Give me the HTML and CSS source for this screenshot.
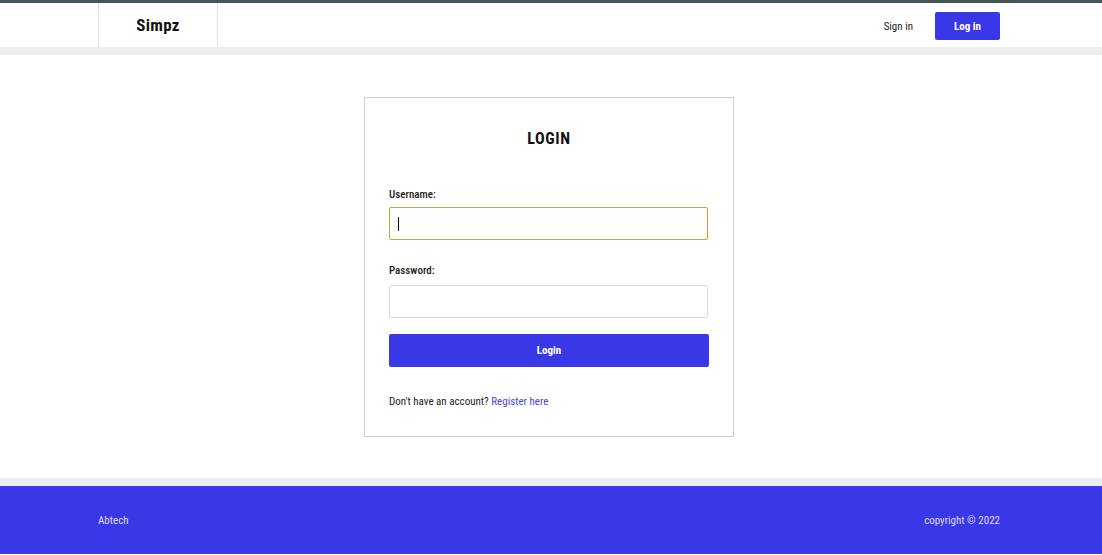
FILE: index.html
```html
<!DOCTYPE html>
<html lang="en">
<head>
<meta charset="utf-8">
<title>Simpz - Login</title>
<link rel="stylesheet" href="styles.css">
</head>
<body>
<header class="topbar">
  <div class="container nav">
    <a class="brand" href="#">Simpz</a>
    <div class="nav-actions">
      <a class="nav-link" href="#">Sign in</a>
      <a class="nav-btn" href="#">Log in</a>
    </div>
  </div>
</header>
<div class="band"></div>
<main class="main">
  <form class="card">
    <h2 class="card-title">LOGIN</h2>
    <label class="field-label" for="username">Username:</label>
    <div class="input-wrap">
      <input class="field-input active-input" id="username" type="text">
      <span class="caret"></span>
    </div>
    <label class="field-label field-label-2" for="password">Password:</label>
    <input class="field-input pw" id="password" type="password">
    <button class="submit" type="button">Login</button>
    <p class="register">Don't have an account? <a href="#">Register here</a></p>
  </form>
</main>
<div class="band"></div>
<footer class="footer">
  <div class="container foot">
    <span>Abtech</span>
    <span>copyright © 2022</span>
  </div>
</footer>
</body>
</html>
```

FILE: styles.css
```css
* { box-sizing: border-box; }
html, body { margin: 0; padding: 0; }
body {
  font-family: "Roboto Condensed", "Liberation Sans Narrow", "DejaVu Sans Condensed", Roboto, sans-serif;
  background: #fff;
  color: #111;
  font-size: 11px;
}
a { text-decoration: none; }

.container {
  width: 902px;
  margin-left: 98px;
}

.topbar {
  border-top: 3px solid #46575b;
  height: 47px;
  background: #fff;
}
.nav {
  display: flex;
  justify-content: space-between;
  align-items: center;
  height: 44px;
}
.brand {
  display: flex;
  align-items: center;
  justify-content: center;
  width: 120px;
  height: 44px;
  border-left: 1px solid #e2e2e2;
  border-right: 1px solid #e2e2e2;
  color: #111;
  font-weight: 700;
  font-size: 17px;
  letter-spacing: 0.3px;
}
.nav-actions {
  display: flex;
  align-items: center;
  gap: 22px;
  padding-top: 2px;
}
.nav-link {
  color: #222;
  font-size: 11px;
}
.nav-btn {
  display: flex;
  align-items: center;
  justify-content: center;
  width: 65px;
  height: 28px;
  background: #3a38e6;
  border-radius: 2px;
  color: #fff;
  font-weight: 700;
  font-size: 11px;
}

.band {
  height: 8px;
  background: #eeeeee;
}

.main {
  padding: 42px 0 41px 0;
  display: flex;
}
.card {
  margin-left: 364px;
  width: 370px;
  height: 340px;
  border: 1px solid #cfcfcf;
  padding: 31px 24px 0 24px;
  display: flex;
  flex-direction: column;
}
.card-title {
  margin: 0;
  text-align: center;
  font-size: 16px;
  line-height: 20px;
  font-weight: 700;
  letter-spacing: 0.6px;
  color: #111;
}
.field-label {
  margin-top: 38px;
  line-height: 16px;
  font-size: 11px;
  font-weight: 500;
  color: #1a1a1a;
}
.field-label-2 { margin-top: 23px; }
.input-wrap {
  position: relative;
  margin-top: 4px;
  width: 319px;
  height: 33px;
}
.field-input {
  display: block;
  width: 319px;
  height: 33px;
  border: 1px solid #d9d9d9;
  border-radius: 2px;
  padding: 0 8px;
  font-family: inherit;
  font-size: 13px;
  outline: none;
  background: #fff;
}
.active-input {
  border: 1px solid #c8a436;
}
.caret {
  position: absolute;
  left: 9px;
  top: 10px;
  width: 1px;
  height: 14px;
  background: #111;
}
.pw { margin-top: 6px; }
.submit {
  margin-top: 16px;
  width: 320px;
  height: 33px;
  border: none;
  border-radius: 2px;
  background: #3a38e6;
  color: #fff;
  font-family: inherit;
  font-weight: 700;
  font-size: 11px;
}
.register {
  margin: 27px 0 0 0;
  line-height: 16px;
  font-size: 11px;
  color: #222;
}
.register a { color: #4a47d8; }

.footer {
  height: 68px;
  background: #3a38e6;
}
.foot {
  display: flex;
  justify-content: space-between;
  align-items: center;
  height: 68px;
  color: #dcdcf8;
  font-size: 11px;
}
```
